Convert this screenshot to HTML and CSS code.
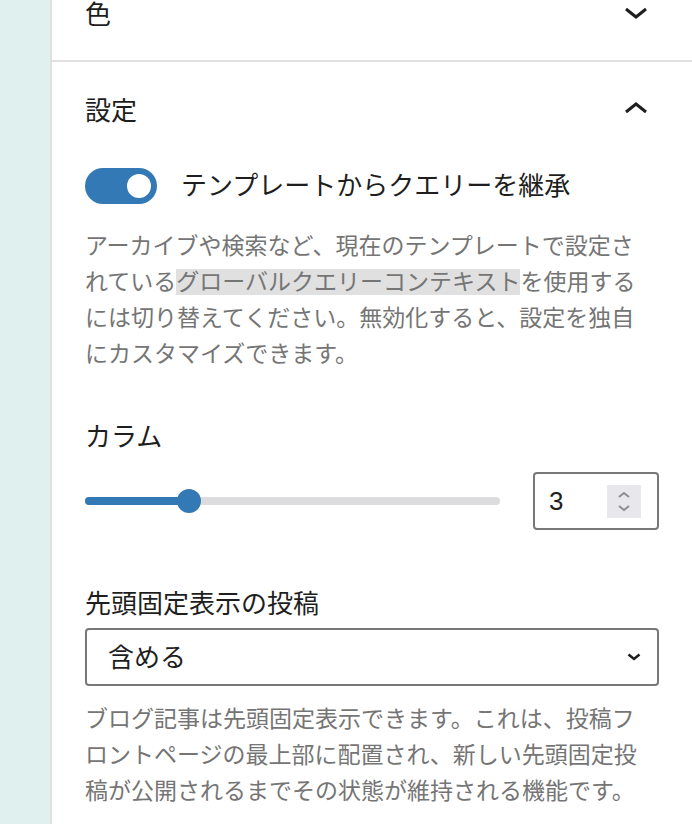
FILE: index.html
```html
<!DOCTYPE html>
<html lang="ja">
<head>
    <meta charset="UTF-8">
    <meta name="viewport" content="width=device-width, initial-scale=1.0">
    <title>クエリーループ設定</title>
    <link rel="stylesheet" href="styles.css">
</head>
<body>
    <div class="layout">
        <div class="canvas-edge"></div>

        <aside class="sidebar">
            <!-- collapsed panel -->
            <section class="panel panel-closed">
                <button class="panel-title" type="button">
                    <span>色</span>
                    <svg class="chevron" viewBox="0 0 24 12" width="24" height="12"><polyline points="2,2 12,10 22,2"/></svg>
                </button>
            </section>

            <!-- open panel -->
            <section class="panel panel-open">
                <button class="panel-title" type="button">
                    <span>設定</span>
                    <svg class="chevron" viewBox="0 0 24 12" width="24" height="12"><polyline points="2,10 12,2 22,10"/></svg>
                </button>

                <div class="panel-body">
                    <div class="toggle-row">
                        <span class="toggle"><span class="knob"></span></span>
                        <label class="toggle-label">テンプレートからクエリーを継承</label>
                    </div>
                    <p class="help help-toggle">アーカイブや検索など、現在のテンプレートで設定されている<span class="mark">グローバルクエリーコンテキスト</span>を使用するには切り替えてください。無効化すると、設定を独自にカスタマイズできます。</p>

                    <label class="field-label label-columns">カラム</label>
                    <div class="range-row">
                        <div class="range">
                            <div class="range-track"></div>
                            <div class="range-fill" style="width: 25%"></div>
                            <div class="range-thumb" style="left: 25%"></div>
                        </div>
                        <div class="number">
                            <span class="number-value">3</span>
                            <span class="spin">
                                <svg viewBox="0 0 12 6" width="12" height="6"><polyline points="1,5 6,1 11,5"/></svg>
                                <svg viewBox="0 0 12 6" width="12" height="6"><polyline points="1,1 6,5 11,1"/></svg>
                            </span>
                        </div>
                    </div>

                    <label class="field-label label-sticky">先頭固定表示の投稿</label>
                    <div class="select">
                        <span>含める</span>
                        <svg viewBox="0 0 14 8" width="14" height="8"><polyline points="1.5,1.5 7,6 12.5,1.5"/></svg>
                    </div>
                    <p class="help help-sticky">ブログ記事は先頭固定表示できます。これは、投稿フロントページの最上部に配置され、新しい先頭固定投稿が公開されるまでその状態が維持される機能です。</p>
                </div>
            </section>
        </aside>
    </div>
</body>
</html>
```

FILE: styles.css
```css
body {
    margin: 0;
    height: 824px;
    overflow: hidden;
    font-family: "Liberation Sans", "Noto Sans CJK JP", sans-serif;
    color: #1e1e1e;
    background: #fff;
}

.layout {
    display: flex;
    height: 824px;
}

.canvas-edge {
    width: 50px;
    flex: none;
    background: #dff0ee;
}

.sidebar {
    flex: 1;
    background: #fff;
    border-left: 2px solid #e0e0e0;
}

.panel { border-bottom: 2px solid #e0e0e0; }

.panel-closed { margin-top: -31px; }

.panel-title {
    display: flex;
    align-items: center;
    justify-content: space-between;
    width: 100%;
    height: 91px;
    padding: 0 44px 4px 33px;
    border: none;
    background: none;
    font-family: inherit;
    font-size: 26px;
    color: #1e1e1e;
    text-align: left;
}

.panel-open .panel-title { height: 96px; }

.chevron polyline {
    fill: none;
    stroke: #1e1e1e;
    stroke-width: 3;
}

.panel-body { padding: 10px 33px 48px 33px; }

.toggle-row {
    display: flex;
    align-items: center;
    gap: 24px;
}

.toggle {
    position: relative;
    width: 72px;
    height: 36px;
    border-radius: 18px;
    background: #3279b5;
    flex: none;
}

.knob {
    position: absolute;
    top: 6px;
    right: 6px;
    width: 24px;
    height: 24px;
    border-radius: 50%;
    background: #fff;
}

.toggle-label {
    font-size: 26px;
    line-height: 36px;
}

.help {
    max-width: 560px;
    margin: 0;
    font-size: 23px;
    line-height: 36px;
    color: #757575;
}

.help-toggle { margin-top: 24px; }

.mark { background: #e0e0e0; }

.field-label {
    display: block;
    font-size: 26px;
    line-height: 36px;
}

.label-columns { margin-top: 47px; }

.range-row {
    display: flex;
    align-items: center;
    gap: 33px;
    margin-top: 17px;
}

.range {
    position: relative;
    flex: 1;
    height: 58px;
}

.range-track {
    position: absolute;
    left: 0;
    right: 0;
    top: 25px;
    height: 8px;
    border-radius: 4px;
    background: #dcdcde;
}

.range-fill {
    position: absolute;
    left: 0;
    top: 25px;
    height: 8px;
    border-radius: 4px;
    background: #3279b5;
}

.range-thumb {
    position: absolute;
    top: 17px;
    width: 24px;
    height: 24px;
    margin-left: -12px;
    border-radius: 50%;
    background: #3279b5;
}

.number {
    box-sizing: border-box;
    display: flex;
    align-items: center;
    justify-content: space-between;
    width: 126px;
    height: 58px;
    padding: 0 16px 0 14px;
    border: 2px solid #787878;
    border-radius: 4px;
}

.number-value { font-size: 26px; }

.spin {
    display: flex;
    flex-direction: column;
    align-items: center;
    justify-content: center;
    gap: 7px;
    width: 34px;
    height: 33px;
    background: #e8e8ec;
}

.spin polyline {
    fill: none;
    stroke: #8e8e93;
    stroke-width: 2;
}

.label-sticky { margin-top: 56px; }

.select {
    box-sizing: border-box;
    display: flex;
    align-items: center;
    justify-content: space-between;
    height: 58px;
    margin-top: 6px;
    padding: 0 16px 3px 21px;
    border: 2px solid #787878;
    border-radius: 4px;
    font-size: 26px;
}

.select svg { margin-top: 3px; }

.select polyline {
    fill: none;
    stroke: #1e1e1e;
    stroke-width: 2.5;
}

.help-sticky { margin-top: 15px; }
```
